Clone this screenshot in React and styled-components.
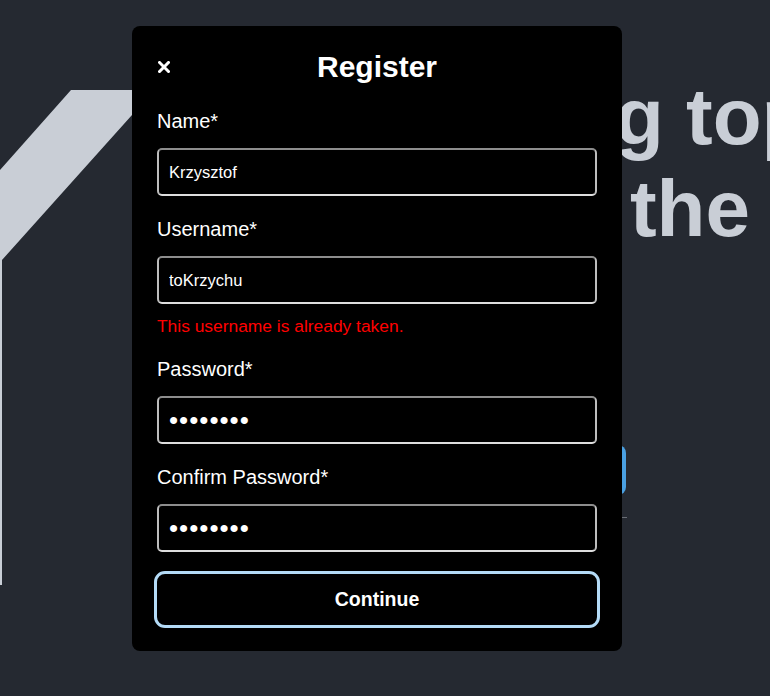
import React from 'react'
import styled, { createGlobalStyle } from 'styled-components'

const GlobalStyle = createGlobalStyle`
    body {
        margin: 0;
        background-color: #252931;
        font-family: Arial, "Liberation Sans", sans-serif;
        overflow: hidden;
    }
`

const Logo = () => (
    <LogoSvg width="300" height="696" viewBox="0 0 300 696">
        <polygon
            points="71,90 300,90 300,115 132,115 2,260 2,585 -40,585 -40,215"
            fill="#c9ced6"
        />
    </LogoSvg>
)

const CloseIcon = () => (
    <svg width="12" height="12" viewBox="0 0 12 12">
        <path d="M1.5 1.5 L10.5 10.5 M10.5 1.5 L1.5 10.5" stroke="#fff" strokeWidth="3" strokeLinecap="square" />
    </svg>
)

const fields = [
    { label: 'Name*', type: 'text', value: 'Krzysztof' },
    { label: 'Username*', type: 'text', value: 'toKrzychu', error: 'This username is already taken.' },
    { label: 'Password*', type: 'password', value: 'secret12' },
    { label: 'Confirm Password*', type: 'password', value: 'secret12' },
]

const App = () => {
    return (
        <>
            <GlobalStyle />
            <Page>
                <Logo />
                <Hero>
                    <h1>
                        Bringing top quality
                        <br />
                        gear to the table
                    </h1>
                    <HeroButton>Get started</HeroButton>
                    <Divider />
                </Hero>
            </Page>

            <Modal>
                <ModalHeader>
                    <CloseButton aria-label="Close"><CloseIcon /></CloseButton>
                    <h2>Register</h2>
                </ModalHeader>

                <Form onSubmit={e => e.preventDefault()}>
                    {fields.map(f => (
                        <Field key={f.label}>
                            <label>{f.label}</label>
                            <Input type={f.type} defaultValue={f.value} $masked={f.type === 'password'} />
                            {f.error && <ErrorText>{f.error}</ErrorText>}
                        </Field>
                    ))}
                    <SubmitButton type="submit">Continue</SubmitButton>
                </Form>
            </Modal>
        </>
    )
}

export default App


const Page = styled.div`
    display: flex;
    min-height: 696px;
    white-space: nowrap;
`

const LogoSvg = styled.svg`
    flex: none;
    width: 300px;
    overflow: visible;
`

const Hero = styled.section`
    display: flex;
    flex-direction: column;
    padding: 71px 0 0 41px;

    h1 {
        margin: 0;
        font-size: 80px;
        line-height: 92px;
        font-weight: 700;
        text-indent: -6px;
        color: #c9ced6;
    }
`

const HeroButton = styled.button`
    margin-top: 190px;
    width: 285px;
    height: 50px;
    border: 0;
    border-radius: 8px;
    background-color: #4aa0e2;
    color: #fff;
    font-size: 18px;
    font-weight: 700;
`

const Divider = styled.hr`
    width: 286px;
    margin: 22px 0 0 0;
    border: 0;
    border-top: 1px solid #6a6e76;
`

const Modal = styled.div`
    position: fixed;
    left: 132px;
    top: 26px;
    width: 490px;
    box-sizing: border-box;
    padding: 24px 25px 26px;
    background-color: #000;
    border-radius: 8px;
    color: #fff;
`

const ModalHeader = styled.header`
    display: grid;
    grid-template-columns: 1fr auto 1fr;
    align-items: center;
    margin-bottom: 26px;

    h2 {
        grid-column: 2;
        margin: 0;
        font-size: 30px;
        line-height: 34px;
        font-weight: 700;
    }
`

const CloseButton = styled.button`
    grid-column: 1;
    grid-row: 1;
    justify-self: start;
    display: flex;
    padding: 0 0 0 1px;
    border: 0;
    background: none;
    cursor: pointer;
`

const Form = styled.form`
    display: flex;
    flex-direction: column;
    gap: 22px;
`

const Field = styled.div`
    display: flex;
    flex-direction: column;

    label {
        font-size: 20px;
        line-height: 22px;
        margin-bottom: 16px;
    }
`

const Input = styled.input`
    box-sizing: border-box;
    width: 100%;
    height: 48px;
    padding: 0 10px;
    border: 2px solid;
    border-color: #8d8d8d #bdbdbd #dedede #bdbdbd;
    border-radius: 5px;
    background-color: #000;
    color: #fff;
    font-family: Arial, "Liberation Sans", sans-serif;
    font-size: ${p => (p.$masked ? '26px' : '16.5px')};
    letter-spacing: ${p => (p.$masked ? '1px' : 'normal')};
    outline: none;
`

const ErrorText = styled.p`
    margin: 12px 0 0;
    font-size: 17.4px;
    line-height: 20px;
    color: #f00;
`

const SubmitButton = styled.button`
    height: 51px;
    border: 0;
    border-radius: 8px;
    outline: 3px solid #b4dbf7;
    background-color: #000;
    color: #fff;
    font-family: Arial, "Liberation Sans", sans-serif;
    font-size: 19.5px;
    font-weight: 700;
    cursor: pointer;
`
